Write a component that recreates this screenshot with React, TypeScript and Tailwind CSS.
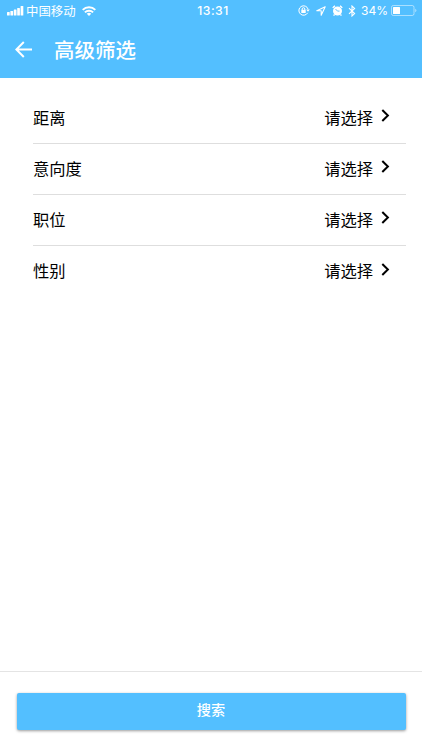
const filters = [
  { label: "距离", value: "请选择" },
  { label: "意向度", value: "请选择" },
  { label: "职位", value: "请选择" },
  { label: "性别", value: "请选择" },
]

function StatusBar() {
  return (
    <div className="grid h-[22px] grid-cols-[1fr_auto_1fr] items-center pl-[7px] pr-[5px] text-[12px] leading-[22px]">
      <div className="flex items-center">
        <svg className="h-[10px] w-[17px]" viewBox="0 0 17 10" fill="currentColor">
          <rect x="0" y="6" width="2.7" height="3.5" rx="0.5" />
          <rect x="3.4" y="5" width="2.7" height="4.5" rx="0.5" />
          <rect x="6.8" y="3.5" width="2.7" height="6" rx="0.5" />
          <rect x="10.2" y="2" width="2.7" height="7.5" rx="0.5" />
          <rect x="13.6" y="0" width="2.7" height="9.5" rx="0.5" />
        </svg>
        <span className="ml-[2px] text-[12.4px]">中国移动</span>
        <svg className="mb-px ml-[6px] h-[10px] w-[14px]" viewBox="0 0 14 10" fill="none" stroke="currentColor" strokeWidth="2">
          <path d="M0.7 3.9a9 9 0 0 1 12.6 0" />
          <path d="M2.9 6.4a5.8 5.8 0 0 1 8.2 0" />
          <path d="M7 10 4.8 7.8a3.2 3.2 0 0 1 4.4 0z" fill="currentColor" stroke="none" />
        </svg>
      </div>
      <span className="pl-[2px] font-['Inter','Liberation_Sans',sans-serif] text-[12.2px] font-medium tracking-[0.5px]">13:31</span>
      <div className="flex items-center justify-end">
        <svg className="mb-px h-[11px] w-[12px] shrink-0" viewBox="0 0 12 11" fill="none" stroke="currentColor" strokeWidth="1">
          <path d="M9.7 7.8A4.7 4.7 0 1 1 10.1 4.2" />
          <path d="M8.2 4.6h3.6l-1.8 2.2z" fill="currentColor" stroke="none" />
          <rect x="3.3" y="4.8" width="4.4" height="3.2" fill="currentColor" stroke="none" />
          <path d="M4.2 5V4a1.3 1.3 0 0 1 2.6 0v1" />
        </svg>
        <svg className="ml-[6px] h-[10px] w-[10px] shrink-0" viewBox="0 0 10 10" fill="none" stroke="currentColor" strokeWidth="1.1" strokeLinejoin="round">
          <path d="M9.2.8.8 4.8h4.4v4.4z" />
        </svg>
        <svg className="mb-px ml-[6px] h-[11px] w-[11px] shrink-0" viewBox="0 0 11 11" fill="none">
          <circle cx="5.5" cy="6" r="4.5" fill="currentColor" />
          <path d="M.8 3A7 7 0 0 1 3 .9M10.2 3A7 7 0 0 0 8 .9M2.5 9.5l-.9 1.1M8.5 9.5l.9 1.1" stroke="currentColor" strokeWidth="1.3" />
          <path d="M3.5 4l2 2.1h2" stroke="#53bfff" strokeWidth="0.9" />
        </svg>
        <svg className="ml-[5px] h-[12px] w-[8px] shrink-0" viewBox="0 0 8 12" fill="none" stroke="currentColor" strokeWidth="1.1">
          <path d="M1 3.2l5.6 5.4L4 11V1l2.6 2.4L1 8.8" />
        </svg>
        <span className="ml-[5px] font-['Inter','Liberation_Sans',sans-serif] text-[12px]">34%</span>
        <svg className="mb-px ml-[3px] h-[11px] w-[26px] shrink-0" viewBox="0 0 26 11">
          <rect x="0.5" y="0.5" width="22.5" height="10" rx="1.8" fill="none" stroke="currentColor" strokeOpacity="0.5" />
          <rect x="2" y="2" width="7" height="7" rx="0.5" fill="currentColor" />
          <path d="M24.2 3.8v3.4q1.2-.5 1.2-1.7t-1.2-1.7z" fill="currentColor" fillOpacity="0.5" />
        </svg>
      </div>
    </div>
  )
}

export default function App() {
  return (
    <div className="flex h-[750px] w-[422px] flex-col bg-white font-['Noto_Sans_CJK_SC',sans-serif] text-black">
      <header className="h-[77.5px] bg-[#53bfff] text-white">
        <StatusBar />
        <div className="flex h-[55px] items-center pl-[14.5px]">
          <svg className="h-[17px] w-[18px]" viewBox="0 0 18 17" fill="none" stroke="currentColor" strokeWidth="2">
            <path d="M17 8.5H1.5M8.8 1 1.3 8.5 8.8 16" />
          </svg>
          <h1 className="mb-px ml-[21.5px] text-[20.5px] font-medium leading-none">高级筛选</h1>
        </div>
      </header>

      <main className="flex-1 pl-[33px] pr-4 pt-[15.5px]">
        {filters.map((item) => (
          <div
            key={item.label}
            className="flex h-[51px] items-center justify-between border-b border-[#dedede] pr-[16.5px] text-[16.3px] last:border-b-0"
          >
            <span className="mb-[2px]">{item.label}</span>
            <div className="flex items-center">
              <span className="mb-[2px]">{item.value}</span>
              <svg className="mb-[5px] ml-[7.5px] h-[13px] w-[9px]" viewBox="0 0 9 13" fill="none" stroke="currentColor" strokeWidth="2">
                <path d="M1.3 1l5.6 5.5L1.3 12" />
              </svg>
            </div>
          </div>
        ))}
      </main>

      <footer className="h-[79px] border-t border-[#e4e4e4] px-[16.5px] pt-[20.5px]">
        <button className="block h-[37.5px] w-full rounded-[2px] bg-[#53bfff] pb-[4px] text-[14.2px] font-medium text-white shadow-[0_1px_3px_rgba(0,0,0,0.4)]">
          搜索
        </button>
      </footer>
    </div>
  )
}
